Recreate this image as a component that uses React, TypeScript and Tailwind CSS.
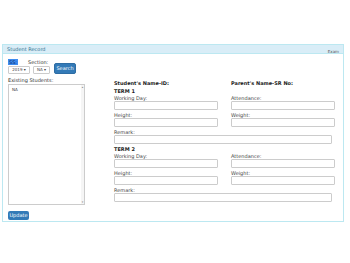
const font = { fontFamily: '"DejaVu Sans", Verdana, sans-serif' };

function Field({ label, wide = false }: { label: string; wide?: boolean }) {
  return (
    <div className="flex flex-col">
      <span className="text-[5px] leading-[6px] text-[#444]">{label}</span>
      <div className={`${wide ? 'w-[218px]' : 'w-[104px]'} h-[9px] border border-[#ccc] rounded-[1px] bg-white`}></div>
    </div>
  );
}

function Term({ title }: { title: string }) {
  return (
    <div className="flex flex-col">
      <div className="text-[5px] leading-[6px] font-bold text-[#222] mb-[1px]">{title}</div>
      <div className="flex gap-[13px]">
        <Field label="Working Day:" />
        <Field label="Attendance:" />
      </div>
      <div className="flex gap-[13px] mt-[2px]">
        <Field label="Height:" />
        <Field label="Weight:" />
      </div>
      <div className="mt-[2px]">
        <Field label="Remark:" wide />
      </div>
    </div>
  );
}

export default function App() {
  return (
    <div className="w-[350px] h-[263px] bg-white pt-[44px] pl-[2px] overflow-hidden" style={font}>
      <div className="w-[342px] h-[178px] border border-[#bce8f1] bg-white">
        {/* Header */}
        <div className="h-[9px] bg-[#d9edf7] border-b border-[#bce8f1] relative">
          <span className="absolute left-[4px] top-[1px] text-[5px] leading-[6px] text-[#31708f]">Student Record</span>
          <span className="absolute right-[4px] top-[4px] text-[4px] leading-[5px] text-[#555]">Exam</span>
        </div>

        <div className="flex pl-[5px] pt-[5px]">
          {/* Left column */}
          <div className="w-[78px] flex flex-col">
            <div className="flex items-end gap-[4px]">
              <div className="flex flex-col">
                <div className="flex gap-[10px] text-[5px] leading-[6px] text-[#333]">
                  <span className="bg-[#3d8cf0] text-[#0b2e6b] px-[1px]">SS:</span>
                  <span>Section:</span>
                </div>
                <div className="flex gap-[3px] mt-[1px]">
                  <div className="w-[22px] h-[8px] border border-[#ccc] rounded-[1px] flex items-center justify-center text-[4px] text-[#444]">2019 ▾</div>
                  <div className="w-[17px] h-[8px] border border-[#ccc] rounded-[1px] flex items-center justify-center text-[4px] text-[#444]">NA ▾</div>
                </div>
              </div>
              <div className="w-[22px] h-[11px] bg-[#337ab7] rounded-[2px] border border-[#2e6da4] text-white text-[5px] flex items-center justify-center">Search</div>
            </div>
            <div className="text-[5px] leading-[6px] text-[#333] mt-[3px]">Existing Students:</div>
            <div className="w-[77px] h-[121px] border border-[#ccc] mt-[1px] relative">
              <span className="absolute left-[3px] top-[2px] text-[4px] leading-[5px] text-[#333]">NA</span>
              <div className="absolute right-0 top-0 bottom-0 w-[3px] bg-[#f5f5f5] flex flex-col justify-between items-center text-[3px] text-[#888]">
                <span>▴</span>
                <span>▾</span>
              </div>
            </div>
            <div className="mt-[6px] w-[21px] h-[9px] bg-[#337ab7] rounded-[2px] text-white text-[5px] flex items-center justify-center">Update</div>
          </div>

          {/* Right section */}
          <div className="ml-[28px] mt-[21px] flex flex-col">
            <div className="flex gap-[13px] text-[5px] leading-[6px] font-bold text-[#222]">
              <span className="w-[104px]">Student's Name-ID:</span>
              <span>Parent's Name-SR No:</span>
            </div>
            <div className="mt-[2px]">
              <Term title="TERM 1" />
            </div>
            <div className="mt-[2px]">
              <Term title="TERM 2" />
            </div>
          </div>
        </div>
      </div>
    </div>
  );
}
